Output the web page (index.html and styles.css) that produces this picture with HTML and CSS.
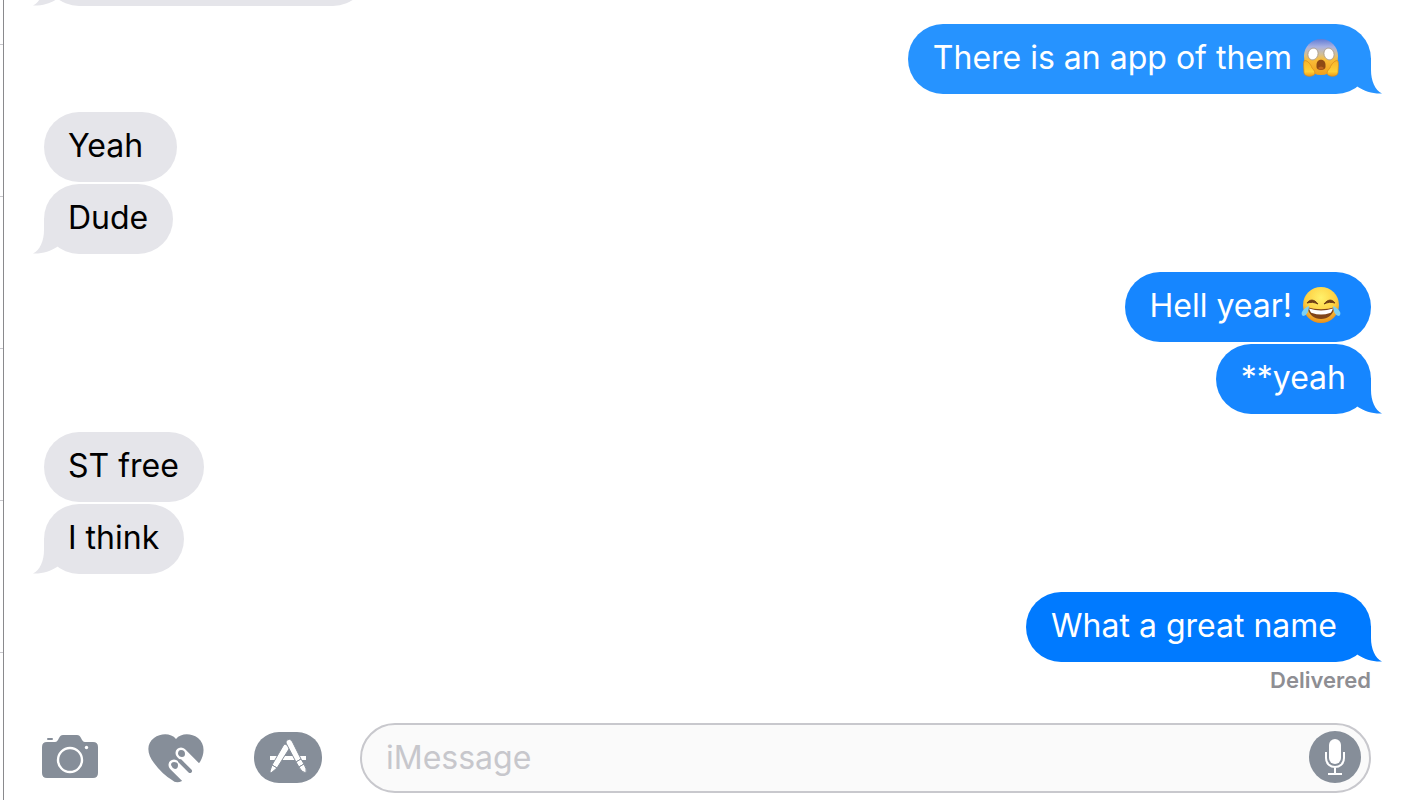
FILE: index.html
```html
<!DOCTYPE html>
<html lang="en">
<head>
  <meta charset="UTF-8">
  <meta name="viewport" content="width=device-width, initial-scale=1.0">
  <title>Messages</title>
  <link rel="stylesheet" href="styles.css">
</head>
<body>
  <!-- Shared bubble tail, mirrored for received messages -->
  <svg class="defs" aria-hidden="true">
    <symbol id="tail" viewBox="0 0 36 36">
      <path d="M6 0H24V12C24 23 28 32 35 35.5C26 36 17 33 11 29L6 24Z"/>
    </symbol>
  </svg>

  <div class="sidebar"></div>

  <main class="conversation">
    <div class="messages">
      <div class="group received">
        <div class="bubble clipped"><svg class="tail" aria-hidden="true"><use href="#tail"/></svg></div>
      </div>

      <div class="group sent tone-1">
        <div class="bubble">There is an app of them <svg class="emoji" viewBox="0 0 40 40" role="img" aria-label="Screaming face">
            <defs>
              <linearGradient id="scream" x1="0" y1="0" x2="0" y2="1">
                <stop offset="0" stop-color="#5f7bd6"/>
                <stop offset="0.22" stop-color="#a9b2e2"/>
                <stop offset="0.42" stop-color="#d2bf96"/>
                <stop offset="0.58" stop-color="#f9bd38"/>
                <stop offset="1" stop-color="#f0a01c"/>
              </linearGradient>
              <linearGradient id="hand" x1="0" y1="0" x2="0" y2="1">
                <stop offset="0" stop-color="#f9b42a"/>
                <stop offset="0.7" stop-color="#ffd035"/>
                <stop offset="1" stop-color="#ee9a18"/>
              </linearGradient>
            </defs>
            <path fill="url(#scream)" d="M20 1C30 1 37 9 37 18C37 29 30 37 20 37S3 29 3 18C3 9 10 1 20 1Z"/>
            <ellipse cx="12" cy="16" rx="5" ry="6" fill="#fff" stroke="#a99a88" stroke-width="0.8" transform="rotate(18 12 16)"/>
            <ellipse cx="28" cy="16" rx="5" ry="6" fill="#fff" stroke="#a99a88" stroke-width="0.8" transform="rotate(-18 28 16)"/>
            <path d="M15.500 27C15.500 20 24.500 20 24.500 27V29C24.500 33 15.500 33 15.500 29Z" fill="#8f4a14"/>
            <path d="M17 30Q20 27 23 30Q20 33 17 30Z" fill="#bd6420"/>
            <path fill="url(#hand)" stroke="#d58a1a" stroke-width="0.7" d="M3 23C2 26 3 31 3 35C4 39 10 39 13 37C15 35 13 32 11 30C10 26 5 21 3 23Z"/>
            <path fill="url(#hand)" stroke="#d58a1a" stroke-width="0.7" d="M37 23C38 26 37 31 37 35C36 39 30 39 27 37C25 35 27 32 29 30C30 26 35 21 37 23Z"/>
          </svg><svg class="tail" aria-hidden="true"><use href="#tail"/></svg></div>
      </div>

      <div class="group received">
        <div class="bubble">Yeah </div>
        <div class="bubble">Dude<svg class="tail" aria-hidden="true"><use href="#tail"/></svg></div>
      </div>

      <div class="group sent tone-2">
        <div class="bubble">Hell year! <svg class="emoji" viewBox="0 0 40 40" role="img" aria-label="Face with tears of joy">
            <defs>
              <radialGradient id="joy" cx="0.5" cy="0.3" r="0.7">
                <stop offset="0" stop-color="#fff16b"/>
                <stop offset="0.6" stop-color="#fed043"/>
                <stop offset="1" stop-color="#e98f1c"/>
              </radialGradient>
            </defs>
            <circle cx="20" cy="19" r="18" fill="url(#joy)"/>
            <path d="M6 17C9 13 13 13 17 18C13 16 10 16 6 17ZM34 17C31 13 27 13 23 18C27 16 30 16 34 17Z" fill="#704018" stroke="#704018" stroke-width="1" stroke-linejoin="round"/>
            <path d="M6 21C15 24 25 24 34 21C32 29 27 33 20 33S8 29 6 21Z" fill="#80451a"/>
            <path d="M8 22.500C16 25 24 25 32 22.500C31 25 30 27 29 27C23 29 17 29 11 27C10 27 9 25 8 22.500Z" fill="#fff"/>
            <path d="M8 20C8 26 5 30 2 30C-1 28 1 23 8 20Z" fill="#7dd0f3"/>
            <path d="M32 20C32 26 35 30 38 30C41 28 39 23 32 20Z" fill="#7dd0f3"/>
          </svg></div>
        <div class="bubble">**yeah<svg class="tail" aria-hidden="true"><use href="#tail"/></svg></div>
      </div>

      <div class="group received">
        <div class="bubble">ST free</div>
        <div class="bubble">I think<svg class="tail" aria-hidden="true"><use href="#tail"/></svg></div>
      </div>

      <div class="group sent tone-3">
        <div class="bubble">What a great name <svg class="tail" aria-hidden="true"><use href="#tail"/></svg></div>
      </div>
      <div class="status">Delivered</div>
    </div>

    <form class="composer">
      <button type="button" class="tool" aria-label="Camera">
        <svg width="56" height="50" viewBox="0 1 56 50">
          <path fill="#868e99" d="M5 10H13C15 10 16 8 17 6C18 4 19 3 21 3H35C37 3 38 4 39 6C40 8 41 10 43 10H51Q56 10 56 15V41Q56 46 51 46H5Q0 46 0 41V15Q0 10 5 10Z"/>
          <rect x="5" y="6" width="6" height="2" rx="1" fill="#868e99"/>
          <circle cx="28" cy="28" r="12" fill="none" stroke="#fff" stroke-width="2.4"/>
          <circle cx="44.500" cy="15.500" r="1.700" fill="#fff"/>
        </svg>
      </button>
      <button type="button" class="tool" aria-label="Digital Touch">
        <!-- Heart with two fingers reaching in from the lower right -->
        <svg width="56" height="50" viewBox="0 0 56 50">
          <path fill="#868e99" d="M28 6C33 0 43 0 50 5C57 11 57 20 52 29L34 48Q28 51 24 47Q14 41 6 30C-1 21-2 11 6 5C13 0 23 0 28 6Z"/>
          <path d="M33 20L56 43M26 32L49 55" stroke="#fff" stroke-width="11" stroke-linecap="round"/>
          <path d="M32 28L42 38" stroke="#868e99" stroke-width="4" stroke-linecap="round"/>
          <path d="M30 21Q30 17 33 17Q37 17 37 21Q37 24 34 24Q31 24 30 21ZM23 32Q23 29 26 29Q30 29 30 32Q30 36 27 36Q24 35 23 32Z" fill="#868e99"/>
        </svg>
      </button>
      <button type="button" class="tool" aria-label="Apps">
        <svg width="68" height="52" viewBox="0 0 68 52">
          <rect y="0" width="68" height="51" rx="25" fill="#868e99"/>
          <path d="M16 24H52V28H16Z" fill="#fff"/>
          <g fill="#fff" stroke="#868e99" stroke-width="1">
            <path d="M31 12L35 14Q36 15 35 17L23 36L18 33L29 14Q30 12 31 12Z"/>
            <path d="M18 33L23 36L17 41Q16 41 16 39Z"/>
            <path d="M33 8Q36 6 38 9L47 27L42 30L32 11Q32 9 33 8Z"/>
            <path d="M42 30L47 27L50 32L45 35Z"/>
            <path d="M45 35L50 32Q53 37 52 41Q47 40 45 35Z"/>
          </g>
        </svg>
      </button>
      <div class="field">
        <input type="text" class="message-input" placeholder="iMessage" aria-label="iMessage">
        <button type="button" class="mic" aria-label="Record audio">
          <svg width="52" height="52" viewBox="0 0 52 52">
            <circle cx="26" cy="26" r="26" fill="#868e99"/>
            <rect x="20" y="8" width="12" height="25" rx="6" fill="#fff"/>
            <path d="M17 21V27C17 39 35 39 35 27V21M26 36V43M19 43H33" fill="none" stroke="#fff" stroke-width="2"/>
          </svg>
        </button>
      </div>
    </form>
  </main>
</body>
</html>
```
FILE: styles.css
```css
* {
  box-sizing: border-box;
}

body {
  margin: 0;
  height: 100vh;
  display: flex;
  overflow: hidden;
  background-color: #fff;
  font-family: Inter, "Liberation Sans", sans-serif;
}

.defs {
  position: absolute;
  width: 0;
  height: 0;
}

/* Edge of the chat list, one line per row */
.sidebar {
  flex: none;
  width: 4px;
  border-right: 1px solid #8a8a8d;
  background: repeating-linear-gradient(to bottom, #fff 0, #fff 151px, #c8c7cc 151px, #c8c7cc 152px) 0 -107px;
}

.conversation {
  flex: 1;
  min-width: 0;
  display: flex;
  flex-direction: column;
}

.messages {
  flex: 1;
  min-height: 0;
  display: flex;
  flex-direction: column;
  justify-content: flex-end;
  gap: 18px;
  padding: 0 40px 29px;
  overflow: hidden;
}

.group {
  flex: none;
  display: flex;
  flex-direction: column;
  gap: 2px;
}

.received {
  align-items: flex-start;
}

.sent {
  align-items: flex-end;
}

.bubble {
  position: relative;
  height: 70px;
  padding: 14px 25px 16px;
  border-radius: 35px;
  font-size: 32px;
  line-height: 40px;
  white-space: pre-wrap;
}

.received .bubble {
  padding-left: 24px;
  background-color: #e5e5ea;
  fill: #e5e5ea;
  color: #000;
}

.sent .bubble {
  color: #fff;
}

.tone-1 .bubble {
  background-color: #2693ff;
  fill: #2693ff;
}

.tone-2 .bubble {
  background-color: #1686ff;
  fill: #1686ff;
}

.tone-3 .bubble {
  background-color: #007aff;
  fill: #007aff;
}

.clipped {
  width: 324px;
}

.tail {
  position: absolute;
  right: -12px;
  bottom: 0;
  width: 36px;
  height: 36px;
}

.received .tail {
  right: auto;
  left: -12px;
  transform: scaleX(-1);
}

.emoji {
  width: 40px;
  height: 40px;
  margin-right: 5px;
  vertical-align: top;
}

.status {
  align-self: flex-end;
  margin-top: -14px;
  color: #8e8e93;
  font-size: 22px;
  font-weight: 600;
  line-height: 28px;
}

.composer {
  flex: none;
  display: flex;
  align-items: center;
  padding: 0 40px 7px 38px;
}

.tool {
  flex: none;
  margin-right: 50px;
  padding: 0;
  border: 0;
  background: none;
}

.tool:nth-child(3) {
  margin-right: 38px;
}

.tool svg,
.mic svg {
  display: block;
}

.field {
  flex: 1;
  display: flex;
  align-items: center;
  height: 70px;
  padding: 0 8px 2px 24px;
  border: 2px solid #c8c8cd;
  border-radius: 35px;
  background-color: #fafafa;
}

.message-input {
  flex: 1;
  min-width: 0;
  padding: 0;
  border: 0;
  outline: none;
  background: none;
  font: inherit;
  font-size: 32px;
}

.message-input::placeholder {
  color: #c7c7cc;
  opacity: 1;
}

.mic {
  flex: none;
  padding: 0;
  border: 0;
  border-radius: 50%;
  background: none;
}
```
